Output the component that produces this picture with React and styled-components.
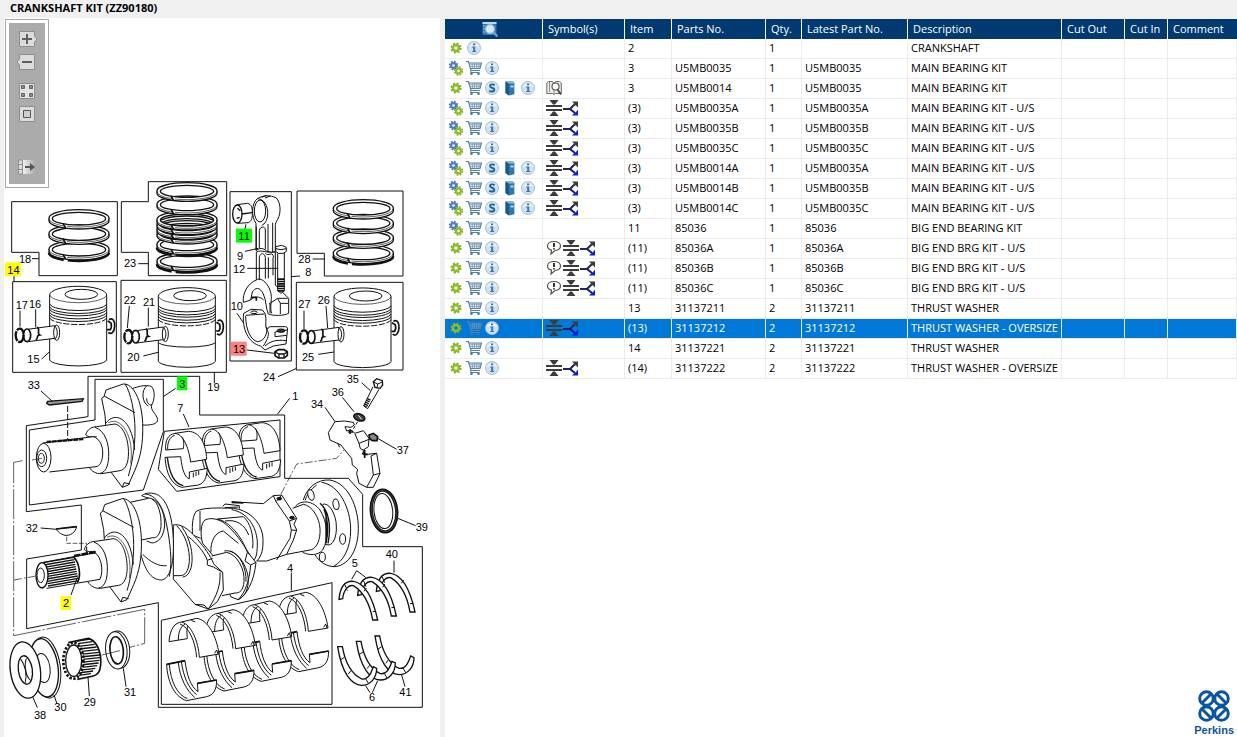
import styled, { createGlobalStyle } from "styled-components";

const columns = [
    { key: 'tools', label: '', width: 98 },
    { key: 'symbols', label: 'Symbol(s)', width: 82 },
    { key: 'item', label: 'Item', width: 47 },
    { key: 'part', label: 'Parts No.', width: 94 },
    { key: 'qty', label: 'Qty.', width: 36 },
    { key: 'latest', label: 'Latest Part No.', width: 106 },
    { key: 'description', label: 'Description', width: 154 },
    { key: 'cutOut', label: 'Cut Out', width: 63 },
    { key: 'cutIn', label: 'Cut In', width: 43 },
    { key: 'comment', label: 'Comment' },
];

const basic = ['gear', 'cart', 'info'];
const multi = ['gears', 'cart', 'info'];
const full = ['gears', 'cart', 'service', 'book', 'info'];
const undersize = ['press', 'branch'];
const noted = ['note', 'press', 'branch'];

const rows = [
    { tools: ['gear', 'info'], symbols: [], item: '2', part: '', qty: '1', latest: '', description: 'CRANKSHAFT' },
    { tools: multi, symbols: [], item: '3', part: 'U5MB0035', qty: '1', latest: 'U5MB0035', description: 'MAIN BEARING KIT' },
    { tools: ['gear', 'cart', 'service', 'book', 'info'], symbols: ['lookup'], item: '3', part: 'U5MB0014', qty: '1', latest: 'U5MB0035', description: 'MAIN BEARING KIT' },
    { tools: multi, symbols: undersize, item: '(3)', part: 'U5MB0035A', qty: '1', latest: 'U5MB0035A', description: 'MAIN BEARING KIT - U/S' },
    { tools: multi, symbols: undersize, item: '(3)', part: 'U5MB0035B', qty: '1', latest: 'U5MB0035B', description: 'MAIN BEARING KIT - U/S' },
    { tools: multi, symbols: undersize, item: '(3)', part: 'U5MB0035C', qty: '1', latest: 'U5MB0035C', description: 'MAIN BEARING KIT - U/S' },
    { tools: full, symbols: undersize, item: '(3)', part: 'U5MB0014A', qty: '1', latest: 'U5MB0035A', description: 'MAIN BEARING KIT - U/S' },
    { tools: full, symbols: undersize, item: '(3)', part: 'U5MB0014B', qty: '1', latest: 'U5MB0035B', description: 'MAIN BEARING KIT - U/S' },
    { tools: full, symbols: undersize, item: '(3)', part: 'U5MB0014C', qty: '1', latest: 'U5MB0035C', description: 'MAIN BEARING KIT - U/S' },
    { tools: multi, symbols: [], item: '11', part: '85036', qty: '1', latest: '85036', description: 'BIG END BEARING KIT' },
    { tools: basic, symbols: noted, item: '(11)', part: '85036A', qty: '1', latest: '85036A', description: 'BIG END BRG KIT - U/S' },
    { tools: basic, symbols: noted, item: '(11)', part: '85036B', qty: '1', latest: '85036B', description: 'BIG END BRG KIT - U/S' },
    { tools: basic, symbols: noted, item: '(11)', part: '85036C', qty: '1', latest: '85036C', description: 'BIG END BRG KIT - U/S' },
    { tools: basic, symbols: [], item: '13', part: '31137211', qty: '2', latest: '31137211', description: 'THRUST WASHER' },
    { tools: basic, symbols: undersize, item: '(13)', part: '31137212', qty: '2', latest: '31137212', description: 'THRUST WASHER - OVERSIZE', selected: true },
    { tools: basic, symbols: [], item: '14', part: '31137221', qty: '2', latest: '31137221', description: 'THRUST WASHER' },
    { tools: basic, symbols: undersize, item: '(14)', part: '31137222', qty: '2', latest: '31137222', description: 'THRUST WASHER - OVERSIZE' },
];

const toolNames = {
    cart: 'Add to basket',
    service: 'Service information',
    book: 'Open manual',
    info: 'Part information',
};

// number, x, y of the text start and the highlight colour, in drawing units
const callouts = [
    ['18', 57, 788], ['14', 22, 821, '#ffff00'], ['17', 47, 926], ['16', 87, 924],
    ['22', 371, 912], ['21', 429, 919], ['15', 82, 1088], ['20', 382, 1083], ['23', 372, 801],
    ['11', 715, 720, '#00ff00'], ['9', 711, 779], ['12', 699, 819], ['8', 916, 829],
    ['10', 692, 930], ['13', 699, 1059, '#ff8080'], ['28', 895, 790], ['27', 895, 923],
    ['26', 953, 912], ['25', 906, 1083], ['24', 789, 1144], ['33', 83, 1167],
    ['3', 538, 1163, '#00ff00'], ['19', 622, 1173], ['7', 532, 1237], ['32', 77, 1597],
    ['1', 877, 1201], ['35', 1040, 1149], ['36', 995, 1189], ['34', 933, 1224],
    ['37', 1190, 1361], ['39', 1247, 1594], ['40', 1157, 1675], ['2', 189, 1822, '#ffff00'],
    ['29', 251, 2117], ['30', 163, 2134], ['31', 372, 2087], ['38', 102, 2156],
    ['4', 861, 1716], ['5', 1055, 1702], ['6', 1107, 2103], ['41', 1198, 2089],
];

export default function App(){
    return(
        <Page>
            <GlobalStyle />
            <Title>CRANKSHAFT KIT (ZZ90180)</Title>
            <Panes>
                <DrawingPane>
                    <Diagram />
                    <Toolbar />
                </DrawingPane>
                <ListPane>
                    <PartsTable />
                    <Logo />
                </ListPane>
            </Panes>
        </Page>
    );
}

function Toolbar(){
    return(
        <ToolFrame>
            <ToolStrip>
                <ToolButton aria-label="Zoom in" $after={7}>
                    <ToolIcon viewBox="0 0 20 16">
                        <path d="M2.5 .5H17.5V5L20 8L17.5 11V15.5H2.5Z" fill="#dcdcdc" stroke="#8e8e8e" />
                        <path d="M5 8H15M10 3V13" stroke="#606060" strokeWidth="2" />
                    </ToolIcon>
                </ToolButton>
                <ToolButton aria-label="Zoom out" $after={13}>
                    <ToolIcon viewBox="0 0 20 16">
                        <path d="M2.5 .5H17.5V15.5H2.5V11L0 8L2.5 5Z" fill="#dcdcdc" stroke="#8e8e8e" />
                        <path d="M5 8H15" stroke="#606060" strokeWidth="2" />
                    </ToolIcon>
                </ToolButton>
                <ToolButton aria-label="Fit to window" $after={7}>
                    <ToolIcon viewBox="0 0 20 16">
                        <path d="M2.5 .5H17.5V15.5H2.5Z" fill="#e2e2e2" stroke="#8e8e8e" />
                        <path d="M4.5 2.5h3v3h-3zM12.5 2.5h3v3h-3zM4.5 10.5h3v3h-3zM12.5 10.5h3v3h-3z" fill="#888" stroke="#666" />
                    </ToolIcon>
                </ToolButton>
                <ToolButton aria-label="Actual size" $after={37}>
                    <ToolIcon viewBox="0 0 20 16">
                        <path d="M2.5 .5H17.5V15.5H2.5Z" fill="#dcdcdc" stroke="#8e8e8e" />
                        <path d="M6.5 4.5h7v7h-7z" fill="#d0d0d0" stroke="#555" />
                    </ToolIcon>
                </ToolButton>
                <ToolButton aria-label="Hide list" $after={0}>
                    <ToolIcon viewBox="0 0 20 16">
                        <defs>
                            <linearGradient id="fade">
                                <stop offset="0" stopColor="#f0f0f0" />
                                <stop offset="1" stopColor="#ababab" />
                            </linearGradient>
                        </defs>
                        <path d="M1.5 1h4v14h-4zM1.5 5.5h4M1.5 10.5h4" fill="#dcdcdc" stroke="#8e8e8e" />
                        <path d="M6 1H18V15H6Z" fill="url(#fade)" />
                        <path d="M8 8H14" stroke="#555" strokeWidth="2" />
                        <path d="M13 4L18 8L13 12Z" fill="#555" />
                    </ToolIcon>
                </ToolButton>
            </ToolStrip>
        </ToolFrame>
    );
}

function PartsTable(){
    return(
        <Table>
            <colgroup>
                {columns.map(column => <Column key={column.key} $width={column.width} />)}
            </colgroup>
            <thead>
                <tr>
                    {columns.map(column => (
                        <HeadCell key={column.key} aria-label={column.label || 'Actions'}>
                            {column.label || <HeadIcon><Icon name="search" /></HeadIcon>}
                        </HeadCell>
                    ))}
                </tr>
            </thead>
            <tbody>
                {rows.map((row, index) => (
                    <Row key={index} $selected={row.selected}>
                        {columns.map(({ key }) => (
                            <Cell key={key}>
                                {key === 'tools' && <Tools names={row.tools} />}
                                {key === 'symbols' && <Symbols names={row.symbols} />}
                                {key !== 'tools' && key !== 'symbols' && row[key]}
                            </Cell>
                        ))}
                    </Row>
                ))}
            </tbody>
        </Table>
    );
}

function Tools({ names }){
    return(
        <IconRow $gap={2}>
            {names.map(name => toolNames[name]
                ? <IconButton key={name} aria-label={toolNames[name]}><Icon name={name} /></IconButton>
                : <Icon key={name} name={name} />
            )}
        </IconRow>
    );
}

function Symbols({ names }){
    return(
        <IconRow $gap={1}>
            {names.map(name => <Icon key={name} name={name} />)}
        </IconRow>
    );
}

function Icon({ name }){
    return <Glyph viewBox="0 0 16 16" aria-hidden="true">{glyphs[name]}</Glyph>;
}

const disc = <>
    <circle cx="8" cy="8" r="6.6" fill="#cfe0ee" stroke="#9cbbd3" strokeWidth=".8" />
    <path d="M3 7A5.2 5.2 0 0 1 13 7Q8 5 3 7Z" fill="#eaf3f9" />
</>;

const glyphs = {
    gear: <>
        <circle cx="8" cy="8" r="4.6" fill="none" stroke="#7fb21c" strokeWidth="2" strokeDasharray="2 1.61" />
        <circle cx="8" cy="8" r="3" fill="none" stroke="#8cbf26" strokeWidth="2.6" />
    </>,
    gears: <>
        <circle cx="5.5" cy="5.5" r="3.8" fill="none" stroke="#3a6fc4" strokeWidth="1.8" strokeDasharray="1.7 1.28" />
        <circle cx="5.5" cy="5.500" r="2.4" fill="none" stroke="#4a7fd0" strokeWidth="2.2" />
        <circle cx="10.5" cy="11" r="3.8" fill="none" stroke="#7fb21c" strokeWidth="1.8" strokeDasharray="1.7 1.28" />
        <circle cx="10.5" cy="11" r="2.4" fill="none" stroke="#8cbf26" strokeWidth="2.2" />
    </>,
    cart: <>
        <path d="M0 1.5H2.500L5 10.5H14M3 3H15.5L14 8.5H5" fill="none" stroke="#5580a8" strokeWidth="1.2" />
        <path d="M4 4.8H15M4.4 6.7H14.5M6.3 3V8.5M8.5 3V8.5M10.700 3V8.5M12.9 3V8.5" stroke="#6f95b8" strokeWidth=".8" />
        <path d="M5.2 10.5L4.500 12.5H13.5" fill="none" stroke="#5580a8" />
        <circle cx="5.5" cy="13.8" r="1.3" fill="#4d789f" />
        <circle cx="12.5" cy="13.8" r="1.3" fill="#4d789f" />
    </>,
    info: <>
        {disc}
        <path d="M7 3.5H9.2V5.2H7ZM6.2 6.5H9.2V11H10.2V12H6.2V11H7.2V7.5H6.2Z" fill="#3f74ae" />
    </>,
    service: <>
        {disc}
        <path d="M10.6 5.3C9.5 4 6 3.9 6 6C6 8.2 10.3 7.3 10.3 9.7C10.3 12 6.6 11.9 5.3 10.6" fill="none" stroke="#14669c" strokeWidth="1.9" />
    </>,
    book: <>
        <path d="M3.5 1.5L10.5 1L13 3.5V14L7 15.5L3.5 13Z" fill="#2b79b0" />
        <path d="M3.5 1.5L7 3.5V15.5L3.5 13Z" fill="#165a8c" />
        <path d="M3.5 1.5L10.5 1L13 3.5L7 3.5Z" fill="#8dbbdb" />
        <path d="M8.5 5.5H11.5V7.5H8.5Z" fill="#b6d6ea" />
        <path d="M12.5 3.5V14" stroke="#b9cfdf" />
    </>,
    lookup: <>
        <path d="M.8 3L2.5 1.500H6L8 3L10 1.5H13.5L15.3 3V13.5H9.5L8 14.5L6.5 13.5H.8Z" fill="#efefe8" stroke="#6c6c60" />
        <path d="M3.5 2V12M8 3V14" stroke="#8c8c80" />
        <circle cx="9.5" cy="6.5" r="3.5" fill="#fff" stroke="#555" strokeWidth="1.2" />
        <path d="M11.5 9.5L15 14.5" stroke="#4d4d48" strokeWidth="2" />
    </>,
    press: <path d="M0 5H16V7H0ZM0 9H16V11H0ZM3.5 0H12.500L9 4.5H7ZM3.5 16H12.5L9 11.5H7Z" fill="#3c3c3c" />,
    branch: <>
        <path d="M0 9H7L12 4" fill="none" stroke="#24245a" strokeWidth="2" />
        <path d="M7 9L12 13" stroke="#1414a4" strokeWidth="2" />
        <path d="M9 1.500H15V7.5L13 5.5L11 5L11 3.500Z" fill="#3c3c3c" />
        <path d="M15 9.5V15.5H9L11 13.5L13 12Z" fill="#0f1fdc" />
    </>,
    note: <>
        <path d="M8 1.5C12 1.5 14.5 3.5 14.5 6C14.5 8.5 12.5 10.2 9 10.5L5 14L5.5 10.2C3 9.5 1.5 8 1.5 6C1.5 3.5 4 1.5 8 1.5Z" fill="#fff" stroke="#55554c" strokeWidth="1.2" />
        <path d="M8 3V7M8 8.2V9.6" stroke="#222" strokeWidth="1.8" />
    </>,
    search: <>
        <path d="M.5 1H14.5V14H.5Z" fill="#2a78b5" />
        <path d="M.5 1H14.5V3H.5Z" fill="#bcd9ec" />
        <path d="M1 5H3M1 8H3M1 11H3" stroke="#9cc8e6" />
        <circle cx="8" cy="8" r="4.5" fill="#d9e9f4" stroke="#9bb4c6" strokeWidth="1.3" />
        <path d="M11.5 11.5L15.5 15.5" stroke="#6aa8d8" strokeWidth="2.2" />
    </>,
};

function Ring({ cx, cy, rx = 90, ry = 25, heavy }){
    return(
        <g transform={`translate(${cx} ${cy})`} strokeWidth="4">
            <path
                d={`M${-rx} 0A${rx} ${ry} 0 0 1 ${rx} 0V8A${rx} ${ry} 0 0 1 ${-rx} 8ZM${10 - rx} 2A${rx - 10} ${ry - 6} 0 0 0 ${rx - 10} 2A${rx - 10} ${ry - 6} 0 0 0 ${10 - rx} 2Z`}
                fill="#fff"
                fillRule="evenodd"
            />
            <path d={`M${-rx} 2A${rx} ${ry} 0 0 0 ${-45} 24M${-36} 25A${rx} ${ry} 0 0 0 ${rx} 2`} strokeWidth="2" />
            <path d="M-48 16L-40 30" strokeWidth="5" />
            {heavy && <path d={`M${-rx} 11A${rx} ${ry} 0 0 0 -46 33M-34 34A${rx} ${ry} 0 0 0 ${rx} 11`} strokeWidth="7" />}
        </g>
    );
}

function Piston({ x, y, banded }){
    return(
        <g transform={`translate(${x} ${y})`}>
            <path d="M0 0A85 26 0 0 1 171 0V195A86 20 0 0 1 0 195Z" fill="#fff" />
            <path d="M0 0A86 26 0 0 0 171 0" strokeWidth="2" />
            <ellipse cx="95" cy="-2" rx="49" ry="15" />
            {[27, 36, 43, 52, 60].map(top => <path key={top} d={`M0 ${top}A86 22 0 0 0 171 ${top}`} />)}
            <path d="M0 69A86 22 0 0 0 171 69" strokeDasharray="18 5" />
            {banded && <path d="M0 138A86 16 0 0 0 171 138" />}
            <path d="M-66 103L15 92V130L-66 140Z" fill="#fff" />
            <ellipse cx="21" cy="113" rx="9" ry="23" fill="#fff" />
            <path d="M16 93C25 105 25 123 16 133" />
            <ellipse cx="-68" cy="121" rx="11" ry="19" fill="#fff" strokeWidth="5" />
            <path d="M-38 97C-26 102 -40 115 -30 120C-44 122 -30 130 -42 134" strokeWidth="5" />
            <ellipse cx="-90" cy="121" rx="12" ry="20" strokeWidth="7" strokeDasharray="30 3" />
            <path d="M178 74C190 66 196 80 195 94C194 112 184 120 176 112M174 78L184 84C186 92 186 98 182 104L172 104" strokeWidth="5" />
        </g>
    );
}

function Web(){
    return(
        <>
            <path d="M317 165L315 135L305 85L312 80L318 60L370 42C400 40 425 90 428 160C430 220 422 260 405 300L385 345L367 352L332 305" fill="#fff" />
            <path d="M367 352L372 338L390 342M375 42C392 65 405 130 405 180C406 230 394 290 385 318M312 78L405 128M317 160C340 130 370 140 388 175C398 195 401 215 404 240" />
            <path d="M257 195C262 176 278 170 290 170L345 162C375 168 388 220 385 260C383 288 372 300 360 302L305 311C288 312 275 304 268 292" fill="#fff" />
            <path d="M285 172C315 182 328 220 326 260C325 290 315 308 300 310M257 195C265 203 280 200 290 200" />
            <path d="M325 158C350 145 370 165 382 190C395 220 396 250 392 280" strokeWidth="2" />
        </>
    );
}

function SmallShell({ x, y }){
    return(
        <g transform={`translate(${x} ${y})`}>
            <path d="M495 262L542 260C546 300 556 325 568 326V306L622 295C620 325 612 340 595 345L545 352C515 345 498 310 495 262Z" fill="#fff" />
            <path d="M502 263C508 310 525 342 550 347" strokeWidth="4" />
            <path d="M580 322V308M588 318V305M596 315V303" />
            <path d="M497 240C495 210 505 193 525 190L565 184C600 185 618 222 620 268L572 276C565 228 548 192 525 190" fill="#fff" />
            <path d="M497 240L550 236C553 218 550 205 545 200M503 238C502 215 510 200 524 196" />
        </g>
    );
}

function UpperShell({ x, y }){
    return(
        <g transform={`translate(${x} ${y})`}>
            <path d="M507 305C510 265 525 248 545 246L590 235C625 240 650 290 657 342L598 352C595 305 575 255 545 246" fill="#fff" />
            <path d="M507 305L562 296C560 275 560 265 564 258M535 300C535 275 542 260 555 252" />
            <path d="M540 252C568 262 586 305 590 352M574 241L586 246M644 340L650 330L654 342" />
        </g>
    );
}

function LowerShell({ x, y }){
    return(
        <g transform={`translate(${x} ${y})`}>
            <path d="M500 373L555 362C560 405 572 440 594 455L592 430L650 420C650 450 640 465 620 470L560 482C520 470 502 420 500 373Z" fill="#fff" />
            <path d="M535 368C540 415 560 452 584 472M508 373C512 425 532 465 562 476M544 364C550 410 566 446 590 464" />
            <path d="M500 373L555 362M592 430L650 420" strokeWidth="5" />
        </g>
    );
}

function Diagram(){
    const splines = Array.from({ length: 11 }, (_, index) => index * 7);
    const teeth = Array.from({ length: 14 }, (_, index) => index * 8);
    return(
        <Drawing viewBox="12 54 1308 2157" role="img" aria-label="Crankshaft kit exploded view">
            <g fill="none" stroke="#111" strokeWidth="3">
                {/* piston rings and pistons */}
                <g transform="translate(0 510)">
                    <path d="M35 95H352V317H117V247H35ZM445 35H680V317H445V247H364V95H445ZM38 335H349V607H38ZM363 331H679V607H363Z" />
                    <Ring cx={237} cy={237} heavy />
                    <Ring cx={237} cy={190} />
                    <Ring cx={237} cy={144} />
                    <Ring cx={561} cy={272} ry={24} heavy />
                    <Ring cx={561} cy={222} ry={24} heavy />
                    <Ring cx={561} cy={190} ry={24} />
                    <Ring cx={561} cy={176} ry={24} />
                    <Ring cx={561} cy={162} ry={24} />
                    <Ring cx={561} cy={148} ry={24} />
                    <Ring cx={561} cy={102} ry={24} />
                    <Ring cx={561} cy={62} ry={24} />
                    <Piston x={149} y={375} />
                    <Piston x={475} y={379} banded />
                    <path d="M96 266H117M415 281H445M42 318V335M60 422V470M107 418V472M125 567L149 545M388 408L382 474M445 413V470M430 558L474 547M643 607V640" />
                </g>

                {/* connecting rod and third piston */}
                <g transform="translate(645 510)">
                    <path d="M45 65H229V573H45ZM246 63H564V318H328V250H246ZM244 337H564V600H244Z" />
                    <Ring cx={445} cy={248} heavy />
                    <Ring cx={445} cy={202} />
                    <Ring cx={445} cy={158} />
                    <Ring cx={445} cy={114} />
                    <Piston x={357} y={380} />
                    <path d="M65 104L98 100C110 104 112 112 112 130C112 148 108 154 100 158L68 160" fill="#fff" />
                    <ellipse cx="67" cy="132" rx="14" ry="27" fill="#fff" strokeWidth="4" />
                    <path d="M67 115L76 122M65 145L74 142M80 132L111 128" strokeWidth="4" />
                    <path d="M123 242V160C108 140 110 98 127 86C142 76 166 74 184 84C197 98 199 128 188 148C183 156 181 160 181 170V245Q168 250 155 243Q138 228 123 242Z" fill="#fff" />
                    <ellipse cx="135" cy="123" rx="17" ry="33" />
                    <path d="M127 86C145 86 160 105 158 135C156 152 150 162 140 166M140 82L155 76M150 84L166 78" />
                    <path d="M133 234V182C134 170 150 166 151 180V238M159 162V244M173 158V246M124 170V240" />
                    <path d="M124 246C140 238 152 250 181 246V345L221 385V430C205 438 175 438 160 432C152 415 155 395 145 372C135 350 120 352 112 366L107 390L85 397C82 370 98 340 124 330Z" fill="#fff" />
                    <path d="M133 330V262C136 245 150 250 151 262V326M151 250C160 262 172 240 176 262M160 262V325M174 262V316M124 330C135 320 155 335 165 360C175 385 162 410 170 430M162 402L188 385H218M165 402V430M188 386L196 400H220M196 400V432M107 390C115 378 135 378 146 390" />
                    <path d="M108 382H122M124 380V392" strokeWidth="5" />
                    <path d="M182 230L200 226L214 232V244L205 250H190L182 244ZM188 250V362L198 370L208 362V248" fill="#fff" />
                    <path d="M182 236L198 239L214 236" />
                    <path d="M198 325V366" strokeWidth="20" strokeDasharray="5 2" />
                    <path d="M86 430L108 418L142 420L150 430C157 450 148 468 155 478L165 470H212L218 474L213 522L175 528L150 540L137 528C100 520 80 475 86 430Z" fill="#fff" />
                    <path d="M92 438C92 480 108 512 128 515C150 512 158 490 155 470M92 436L148 432M107 427A10 4 0 0 0 127 427A10 4 0 0 0 107 427M155 478C165 490 160 505 145 528M180 486L216 480M180 486V500L215 496M150 528C165 515 180 508 214 512" />
                    <ellipse cx="198" cy="482" rx="12" ry="5" fill="#333" />
                    <path d="M180 545L190 539H207L217 545V556L208 564H190L180 557Z" fill="#fff" strokeWidth="5" />
                    <path d="M180 546L192 552H207L217 546M192 552V563M207 552V563" strokeWidth="4" />
                    <path d="M90 244L130 235M97 295H188M229 320L255 318M66 430L85 458M96 540L178 550M93 163L89 180M293 267H328M267 422V478M333 408L338 474M310 553L357 546M189 620L243 596" />
                </g>

                {/* kit outlines and centre lines */}
                <path d="M599 1245V1129H264V1250L79 1277V1535L244 1515V1650L80 1677V1886L475 1808V2122H1267V1640H1088V1483L1045 1435H854V1245Z" />
                <path d="M285 1138H490V1295L430 1470L88 1515V1290L285 1260Z" />
                <path d="M475 1408L493 1294L840 1260V1430L530 1474Z" />
                <path d="M484 1861L996 1748V2113H484Z" />
                <path d="M68 1382L41 1387V1907L434 1828V1930L390 1942" strokeWidth="2" strokeDasharray="90 6 6 6" />
                <path d="M42 1740L108 1728M843 1482L890 1392L1010 1375L1033 1348" strokeWidth="2" strokeDasharray="24 6 6 6" />

                {/* crank nose, keys and front of the shaft */}
                <g transform="translate(0 1110)">
                    <path d="M385 62C405 50 440 42 455 50C465 60 465 88 455 105C450 120 468 130 473 148C473 164 450 166 425 165" fill="#fff" />
                    <path d="M440 48C424 60 425 98 445 108M440 85C440 100 450 108 456 104" />
                    <Web />
                    <path d="M128 219L280 200C300 206 310 230 308 255C306 276 300 288 288 290L148 306" fill="#fff" />
                    <ellipse cx="131" cy="263" rx="22" ry="43" fill="#fff" />
                    <ellipse cx="125" cy="265" rx="15" ry="25" />
                    <ellipse cx="124" cy="265" rx="9" ry="15" />
                    <path d="M140 216L252 207" strokeWidth="7" strokeDasharray="14 2" />
                    <path d="M96 270L126 265" strokeWidth="2" />
                    <path d="M140 100L143 94L250 86L246 94L148 105Z" fill="#999" strokeWidth="4" />
                    <path d="M203 108V212" strokeDasharray="18 6" />
                    <path d="M168 477L230 470C226 488 210 498 195 496C180 492 174 485 168 477Z" fill="#fff" />
                    <path d="M168 477L230 470" strokeWidth="5" />
                    <path d="M200 500V520H260V545" strokeWidth="2" strokeDasharray="14 5" />
                    <path d="M123 63L158 95M527 55L490 80M550 132L567 171M122 474L170 478" />
                </g>

                {/* flange and rear journals */}
                <g transform="translate(390 1425)">
                    <path d="M520 75C530 40 560 12 600 15C655 25 685 95 685 160C685 220 660 270 615 275C590 275 570 262 555 240" fill="#fff" />
                    <path d="M575 22C628 30 662 100 662 165C662 220 640 258 612 273M560 30C540 45 528 62 526 76" />
                    <g fill="#fff">
                        <ellipse cx="543" cy="60" rx="9" ry="16" transform="rotate(-15 543 60)" />
                        <ellipse cx="618" cy="88" rx="9" ry="16" transform="rotate(-10 618 88)" />
                        <ellipse cx="638" cy="192" rx="9" ry="16" />
                        <ellipse cx="577" cy="246" rx="9" ry="14" />
                    </g>
                    <path d="M578 88C595 82 612 108 618 140C622 175 615 205 597 210L580 208" fill="#fff" />
                    <path d="M495 95C515 72 550 78 570 105C592 140 598 190 578 225C562 242 540 242 518 232" fill="#fff" />
                    <path d="M570 85C595 105 605 150 594 205M582 102C594 135 596 170 588 205M588 115V200" strokeWidth="4" />
                    <path d="M488 100L520 88C548 92 568 130 570 160C572 195 560 218 545 224L470 238" fill="#fff" />
                    <path d="M188 180C185 150 188 120 200 108C220 98 260 98 310 100L305 80L400 86L430 62L455 60L500 130L492 148L500 165L490 195L470 238L410 258L380 258C300 240 250 210 212 190Z" fill="#fff" stroke="none" />
                    <path d="M188 180C185 150 188 120 200 108C220 98 260 98 310 100M305 80L400 86L430 62L455 60L500 130L492 148L500 165L490 195L470 238L410 258L380 258M188 180L212 190" />
                    <path d="M305 82L340 84" strokeWidth="5" />
                    <path d="M278 94L285 87L328 92V101M285 98L325 96M430 62L438 80L478 138L500 130M478 138L484 165L500 166M484 165L480 190L440 255M438 80L455 60M210 108V168" />
                    <path d="M310 100C352 104 390 135 398 180C402 220 395 245 380 258M305 104C350 112 378 150 382 200C382 230 380 248 370 258M262 132L340 125C360 142 372 180 368 220M285 138C320 132 345 150 356 180" />
                    <ellipse cx="448" cy="71" rx="7" ry="4" fill="#111" />
                    <ellipse cx="486" cy="128" rx="7" ry="4" fill="#111" />

                    <path d="M225 135C240 127 268 130 290 150C325 180 350 225 360 240L378 263C372 320 350 360 325 374L303 366L250 243L218 205C210 180 212 145 225 135Z" fill="#fff" />
                    <path d="M262 132C300 140 335 185 352 232L345 258L362 270L378 262M362 270C358 320 345 352 325 374M352 232L362 242M243 232C240 198 258 170 280 168L325 205" />
                    <path d="M245 243L290 232C320 238 345 280 342 320C340 345 330 355 315 354L276 362" fill="#fff" />
                    <path d="M283 228C320 220 356 275 355 320C353 350 340 368 325 373M300 228C330 236 350 280 348 320" />

                    <path d="M130 150C150 145 175 160 200 190C225 220 240 240 252 268L278 292L280 345L262 380L235 402L195 388L130 312Z" fill="#fff" />
                    <path d="M140 152C168 180 180 225 178 260C175 290 165 302 150 302L130 302M155 155C182 190 190 240 185 270C180 295 170 305 158 306M175 185C200 205 222 230 232 256L232 270L250 276L278 292M232 256L248 250M270 292C272 330 262 360 235 402M195 388L222 390L235 402" />
                    <path d="M0 82L55 70L35 62C50 50 78 52 92 66C122 92 132 160 130 230C128 280 115 312 95 315C60 315 45 280 33 240" fill="#fff" />
                    <path d="M46 57C78 60 100 95 110 150C120 200 128 260 118 305M65 72C85 80 95 120 93 155C90 180 80 190 68 188L30 196M53 68C88 72 104 110 104 150C102 182 88 202 66 204L50 198M38 238C60 260 85 275 110 272" />
                </g>

                <g transform="translate(-4 1454)">
                    <Web />
                </g>

                {/* splined end and front pulley parts */}
                <g transform="translate(0 1620)">
                    <path d="M125 68L285 38C303 50 312 90 300 118L140 145" fill="#fff" />
                    {splines.map(top => <path key={top} d={`M${130 + top / 5} ${68 + top}L${222 + top / 5} ${52 + top}`} strokeWidth="4" />)}
                    <path d="M222 52C238 68 244 108 232 128" strokeWidth="5" />
                    <ellipse cx="126" cy="106" rx="18" ry="38" fill="#fff" strokeWidth="4" />
                    <ellipse cx="122" cy="106" rx="11" ry="22" />
                    <path d="M222 48L288 36" strokeWidth="8" strokeDasharray="20 3" />
                    <path d="M260 20V40M232 112L213 165" />
                    <g transform="rotate(-8 135 383)">
                        <ellipse cx="138" cy="383" rx="43" ry="92" fill="#fff" />
                        <ellipse cx="132" cy="383" rx="42" ry="88" fill="#fff" strokeWidth="4" />
                        <ellipse cx="128" cy="383" rx="22" ry="44" />
                    </g>
                    <g transform="rotate(-8 76 390)">
                        <ellipse cx="76" cy="390" rx="45" ry="85" fill="#fff" strokeWidth="4" />
                        <ellipse cx="76" cy="390" rx="21" ry="43" strokeWidth="4" />
                        <path d="M66 354C78 374 80 405 70 428M84 356C74 374 74 410 88 424" />
                    </g>
                    <path d="M205 308L265 295C292 302 305 340 302 375C300 400 290 406 280 408L232 418" fill="#fff" strokeWidth="5" />
                    {teeth.map(top => <path key={top} d={`M${232 + Math.sin(top / 34) * 8} ${303 + top}L${270 + Math.sin(top / 34) * 30} ${297 + top}`} strokeWidth="4" />)}
                    <ellipse cx="220" cy="362" rx="30" ry="54" strokeWidth="8" strokeDasharray="7 5" fill="#fff" />
                    <ellipse cx="221" cy="362" rx="24" ry="47" fill="#fff" strokeWidth="4" />
                    <ellipse cx="356" cy="329" rx="33" ry="56" transform="rotate(-6 356 329)" fill="#fff" />
                    <ellipse cx="349" cy="331" rx="32" ry="56" transform="rotate(-6 349 331)" fill="#fff" />
                    <ellipse cx="350" cy="331" rx="20" ry="41" transform="rotate(-6 350 331)" strokeWidth="5" />
                    <path d="M305 345L360 332" strokeWidth="2" />
                    <path d="M98 470L112 503M162 465L171 492M264 412L268 468M370 385L378 440" />
                </g>

                {/* bearing shells */}
                {[2, 1, 0].map(step => <SmallShell key={step} x={step * 110} y={1110 - step * 13} />)}
                {[3, 2, 1, 0].map(step => <LowerShell key={step} x={step * 112} y={1620 - step * 29} />)}
                {[3, 2, 1, 0].map(step => <UpperShell key={step} x={step * 109} y={1620 - step * 26} />)}

                {/* balance weight, fixings and seal */}
                <g transform="translate(645 1110)">
                    <path d="M360 155L388 153L415 157L418 165L408 172L390 170L395 183L408 180L420 190L445 182L462 205L460 230L445 240V254L485 250L495 310L475 352L455 352L432 340L425 310L428 298L412 285L410 265L388 238L378 225L345 210L340 188Z" fill="#fff" />
                    <path d="M485 250L468 258L475 315L495 310M475 315L455 352M462 208L432 220L436 236L445 240M432 220L420 192M368 220L374 232" />
                    <path d="M405 178V192M400 186H414M449 240V264M441 250L458 254" strokeWidth="5" />
                    <path d="M474 50L446 108L458 116L492 58" fill="#fff" />
                    <path d="M462 86L451 110" strokeWidth="12" strokeDasharray="4 2" />
                    <path d="M475 35L485 26L502 32L503 45L495 55L480 52Z" fill="#fff" strokeWidth="4" />
                    <path d="M476 36L488 42L502 36M488 42L486 54" />
                    <ellipse cx="433" cy="142" rx="17" ry="10" transform="rotate(20 433 142)" fill="#444" strokeWidth="5" />
                    <path d="M430 136L440 148" stroke="#fff" />
                    <path d="M462 195L475 190L488 200L486 212L472 212L464 206Z" fill="#888" strokeWidth="5" />
                    <path d="M428 155L412 182" strokeDasharray="10 5" />
                    <ellipse cx="507" cy="423" rx="38" ry="63" transform="rotate(-6 507 423)" strokeWidth="10" />
                    <ellipse cx="507" cy="423" rx="37" ry="62" transform="rotate(-6 507 423)" stroke="#999" strokeWidth="1" />
                    <ellipse cx="505" cy="423" rx="28" ry="53" transform="rotate(-6 505 423)" />
                    <path d="M440 38L466 62M382 82L417 125M330 112L360 155M545 238L488 205M548 445L602 467M224 85L187 133" />
                </g>

                {/* thrust washers */}
                <g transform="translate(645 1620)">
                    {[2, 1, 0].map(step => (
                        <g key={step} transform={`translate(${step * 56} ${step * -12})`} fill="#fff">
                            <path d="M372 178C375 145 388 122 415 124C455 130 475 180 488 240L473 240C465 195 445 155 415 137C400 133 386 150 383 176Z" strokeWidth="4" />
                            <path d="M390 135L397 152M447 154L454 144M473 215L483 214" />
                        </g>
                    ))}
                    {[2, 1, 0].map(step => (
                        <g key={step} transform={`translate(${step * 56} ${step * -16})`} fill="#fff">
                            <path d="M368 320L382 320C390 365 405 400 440 417C460 420 468 400 475 380L485 385C485 415 465 436 440 436C410 435 380 400 368 320Z" strokeWidth="4" />
                            <path d="M376 360L388 352M452 416L460 430M400 402L408 392" />
                        </g>
                    ))}
                    <path d="M229 98V152M410 118L425 92L452 112M537 62V98M452 437L465 458M488 422L472 458M560 405L570 440" />
                </g>
            </g>

            {callouts.map(([number, x, y, highlight]) => (
                <g key={number}>
                    {highlight && <rect x={x - 7} y={y - 34} width={number.length * 17 + 14} height="42" fill={highlight} />}
                    <Callout x={x} y={y}>{number}</Callout>
                </g>
            ))}
        </Drawing>
    );
}

function Logo(){
    return(
        <Brand>
            <BrandMark viewBox="0 0 34 34" aria-hidden="true">
                <g fill="none" stroke="#0a55a0" strokeWidth="3">
                    <circle cx="9.5" cy="9.5" r="6.800" />
                    <circle cx="24.5" cy="9.5" r="6.800" />
                    <circle cx="9.5" cy="24.5" r="6.800" />
                    <circle cx="24.5" cy="24.5" r="6.800" />
                    <path d="M5 14L14 5M20 5L29 14M5 20L14 29M20 29L29 20" />
                </g>
            </BrandMark>
            <BrandName>Perkins</BrandName>
        </Brand>
    );
}

const GlobalStyle = createGlobalStyle`
    * {
        box-sizing: border-box;
    }

    body {
        margin: 0;
        background-color: #f0f0f0;
        color: #000000;
        font-family: "Open Sans", "Noto Sans", sans-serif;
        font-size: 11px;
    }
`

const Page = styled.div`
    min-height: 100vh;
    display: flex;
    flex-direction: column;
`

const Title = styled.h1`
    margin: 0;
    padding: 0 0 2px 10px;
    font-size: 11px;
    font-weight: 700;
    line-height: 16px;
`

const Panes = styled.main`
    flex: 1;
    display: grid;
    grid-template-columns: minmax(0, 109fr) minmax(0, 198fr);
    column-gap: 5px;
    padding-left: 4px;
`

const DrawingPane = styled.section`
    position: relative;
    background-color: #ffffff;
`

const Drawing = styled.svg`
    display: block;
    width: 100%;
`

const Callout = styled.text`
    font-family: "Liberation Sans", Arial, sans-serif;
    font-size: 33px;
    fill: #000000;
`

const ToolFrame = styled.div`
    position: absolute;
    top: 1px;
    left: 1px;
    padding: 3px;
    background-color: #ffffff;
    border: 1px solid #a8a8a8;
`

const ToolStrip = styled.div`
    width: 36px;
    padding: 8px 0 9px;
    display: flex;
    flex-direction: column;
    align-items: center;
    background-color: #ababab;
`

const ToolButton = styled.button`
    margin: 0 0 ${props => props.$after}px;
    padding: 0;
    border: none;
    background: none;
    display: flex;
`

const ToolIcon = styled.svg`
    width: 20px;
    height: 16px;
`

const ListPane = styled.section`
    margin-top: 1px;
    background-color: #ffffff;
    display: flex;
    flex-direction: column;
`

const Table = styled.table`
    width: 100%;
    table-layout: fixed;
    border-collapse: separate;
    border-spacing: 0;
`

const Column = styled.col`
    width: ${props => props.$width ? `${props.$width}px` : 'auto'};
`

const HeadCell = styled.th`
    height: 20px;
    padding: 0 0 0 5px;
    background-color: #003a70;
    border-right: 1px solid #ffffff;
    color: #ffffff;
    font-weight: 400;
    line-height: 20px;
    text-align: left;
    white-space: nowrap;

    &:last-child {
        border-right: none;
    }
`

const HeadIcon = styled.span`
    display: flex;
    justify-content: center;
    padding-right: 12px;
`

const Row = styled.tr`
    background-color: ${props => props.$selected ? '#0078d7' : '#ffffff'};
    color: ${props => props.$selected ? '#ffffff' : '#000000'};
`

const Cell = styled.td`
    height: 20px;
    padding: 0 0 2px 3px;
    border-right: 1px solid #ececec;
    border-bottom: 1px solid #ececec;
    line-height: 17px;
    white-space: nowrap;
    overflow: hidden;
`

const IconRow = styled.div`
    display: flex;
    align-items: center;
    gap: ${props => props.$gap}px;
    height: 17px;
`

const IconButton = styled.button`
    padding: 0;
    border: none;
    background: none;
    display: flex;
`

const Glyph = styled.svg`
    width: 16px;
    height: 16px;
    flex: none;
`

const Brand = styled.div`
    margin-top: auto;
    align-self: flex-end;
    padding-right: 3px;
    display: flex;
    flex-direction: column;
    align-items: center;
`

const BrandMark = styled.svg`
    width: 34px;
    height: 34px;
`

const BrandName = styled.span`
    color: #0a55a0;
    font-family: "Liberation Sans", Arial, sans-serif;
    font-size: 11px;
    font-weight: 700;
    line-height: 14px;
`
